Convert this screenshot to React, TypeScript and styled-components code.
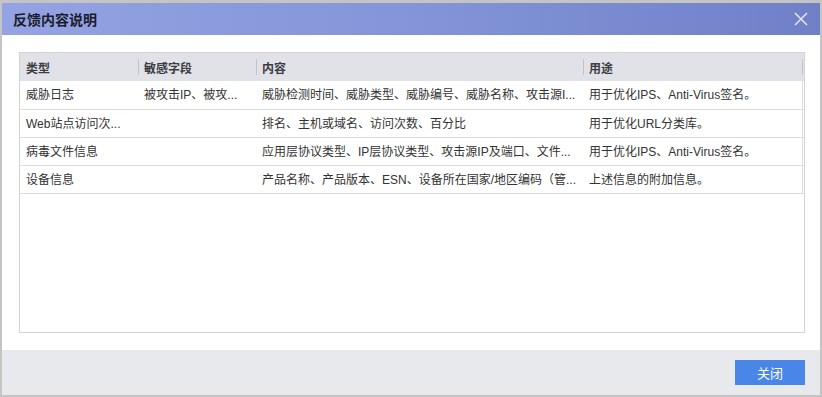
import React from "react";
import styled, { createGlobalStyle } from "styled-components";

const Global = createGlobalStyle`
  html, body { margin: 0; padding: 0; background: #ffffff; }
  body { font-family: "Liberation Sans", "Noto Sans CJK SC", sans-serif; }
  * { box-sizing: border-box; }
`;

const Dialog = styled.div`
  width: 822px;
  height: 397px;
  display: flex;
  flex-direction: column;
  border-style: solid;
  border-color: #c4c4c4;
  border-width: 3px 2px 2px 2px;
  background: #ffffff;
`;

const Header = styled.div`
  height: 32px;
  flex: none;
  display: flex;
  align-items: center;
  justify-content: space-between;
  padding: 0 11px 0 11px;
  background: linear-gradient(to right, #93a3e3 0%, #8395d8 50%, #6f80c7 100%);
`;

const Title = styled.div`
  font-size: 14px;
  font-weight: bold;
  color: #1c1c2c;
`;

const CloseButton = styled.button`
  width: 16px;
  height: 16px;
  padding: 0;
  border: none;
  background: transparent;
  display: flex;
  align-items: center;
  justify-content: center;
  cursor: pointer;
`;

const Body = styled.div`
  flex: 1;
  padding: 17px 15px 17px 17px;
  display: flex;
`;

const TableBox = styled.div`
  flex: 1;
  border: 1px solid #d3d3d3;
  display: flex;
  flex-direction: column;
`;

const Grid = styled.table`
  width: 100%;
  border-collapse: collapse;
  table-layout: fixed;
  font-size: 12px;
`;

const HeadRow = styled.tr`
  background: #e1e2e7;
  height: 28px;
`;

const HeadCell = styled.th<{ $w?: number; $sep?: boolean }>`
  width: ${(p) => (p.$w ? `${p.$w}px` : "auto")};
  padding: 0 6px;
  text-align: left;
  font-weight: bold;
  color: #3c3c44;
  position: relative;
  white-space: nowrap;
  &::before {
    content: "";
    display: ${(p) => (p.$sep ? "block" : "none")};
    position: absolute;
    left: 0;
    top: 6px;
    height: 16px;
    width: 1px;
    background: #c3c3c7;
  }
`;

const EndCell = styled.th`
  width: 2px;
  padding: 0;
  position: relative;
  &::before {
    content: "";
    position: absolute;
    left: 0;
    top: 6px;
    height: 16px;
    width: 1px;
    background: #c3c3c7;
  }
`;

const Row = styled.tr`
  height: 28px;
  border-bottom: 1px solid #dcdcdc;
`;

const Cell = styled.td<{ $last?: boolean }>`
  padding: 2px 5px 0 6px;
  color: #333333;
  white-space: nowrap;
  overflow: hidden;
  line-height: 25px;
  border-right: ${(p) => (p.$last ? "1px solid #dcdcdc" : "none")};
`;

const Spacer = styled.td`
  padding: 0;
`;

const Footer = styled.div`
  height: 45px;
  flex: none;
  background: #e8e9ed;
  display: flex;
  justify-content: flex-end;
  align-items: flex-start;
  padding: 10px 15px 0 0;
`;

const PrimaryButton = styled.button`
  width: 70px;
  height: 25px;
  border: none;
  background: #4a86e8;
  color: #ffffff;
  font-family: "Liberation Sans", "Noto Sans CJK SC", sans-serif;
  font-size: 13px;
  padding: 0;
  cursor: pointer;
`;

const rows = [
  {
    type: "威胁日志",
    field: "被攻击IP、被攻...",
    content: "威胁检测时间、威胁类型、威胁编号、威胁名称、攻击源I...",
    use: "用于优化IPS、Anti-Virus签名。",
  },
  {
    type: "Web站点访问次...",
    field: "",
    content: "排名、主机或域名、访问次数、百分比",
    use: "用于优化URL分类库。",
  },
  {
    type: "病毒文件信息",
    field: "",
    content: "应用层协议类型、IP层协议类型、攻击源IP及端口、文件...",
    use: "用于优化IPS、Anti-Virus签名。",
  },
  {
    type: "设备信息",
    field: "",
    content: "产品名称、产品版本、ESN、设备所在国家/地区编码（管...",
    use: "上述信息的附加信息。",
  },
];

export default function App() {
  return (
    <>
      <Global />
      <Dialog>
        <Header>
          <Title>反馈内容说明</Title>
          <CloseButton aria-label="close">
            <svg width="14" height="14" viewBox="0 0 14 14">
              <path d="M1 1 L13 13 M13 1 L1 13" stroke="#e4e7f6" strokeWidth="1.5" fill="none" />
            </svg>
          </CloseButton>
        </Header>
        <Body>
          <TableBox>
            <Grid>
              <thead>
                <HeadRow>
                  <HeadCell $w={118}>类型</HeadCell>
                  <HeadCell $w={118} $sep>敏感字段</HeadCell>
                  <HeadCell $w={327} $sep>内容</HeadCell>
                  <HeadCell $sep>用途</HeadCell>
                  <EndCell />
                </HeadRow>
              </thead>
              <tbody>
                {rows.map((r) => (
                  <Row key={r.type}>
                    <Cell>{r.type}</Cell>
                    <Cell>{r.field}</Cell>
                    <Cell>{r.content}</Cell>
                    <Cell $last>{r.use}</Cell>
                    <Spacer />
                  </Row>
                ))}
              </tbody>
            </Grid>
          </TableBox>
        </Body>
        <Footer>
          <PrimaryButton>关闭</PrimaryButton>
        </Footer>
      </Dialog>
    </>
  );
}
